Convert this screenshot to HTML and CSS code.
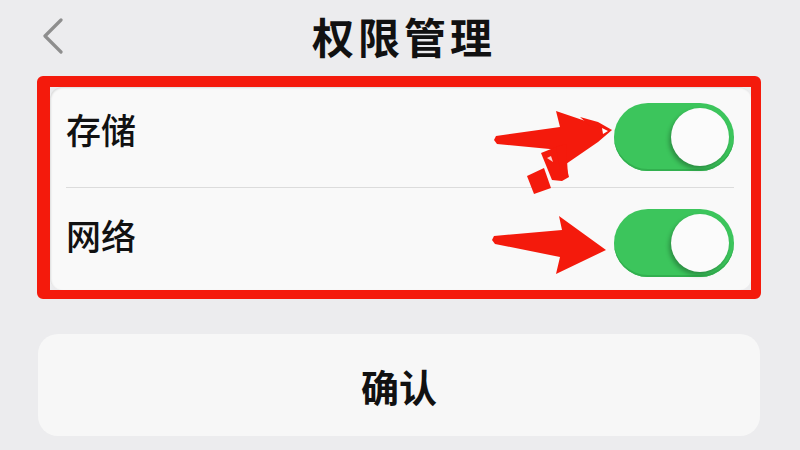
FILE: index.html
```html
<!DOCTYPE html>
<html lang="zh-CN">
<head>
<meta charset="utf-8">
<title>权限管理</title>
<link rel="stylesheet" href="styles.css">
</head>
<body>
<div class="page">
  <header class="topbar">
    <div class="back">
      <svg width="22" height="36" viewBox="0 0 22 36"><polyline points="19,2 3,18 19,34" fill="none" stroke="#8e8e8e" stroke-width="3.2" stroke-linecap="round" stroke-linejoin="round"/></svg>
    </div>
    <h1 class="title">权限管理</h1>
    <div></div>
  </header>

  <section class="frame">
    <div class="card">
      <div class="row first">
        <span class="label">存储</span>
        <span class="toggle"><span class="knob"></span></span>
      </div>
      <div class="row">
        <span class="label">网络</span>
        <span class="toggle"><span class="knob"></span></span>
      </div>
    </div>
  </section>

  <button class="confirm">确认</button>

  <svg class="marks" width="800" height="450" viewBox="0 0 800 450">
    <g fill="#f41a0c">
      <polygon points="496,136 560,127 556,111 612,130 598,142 566,164 560,150 497,144 494,140"/>
      <polygon points="580,117 598,122 612,130 590,126"/>
      <polygon points="541,153 561,145 569,177 562,181 552,180"/>
      <polygon points="556,147 566,144 568,176 561,175"/>
      <polygon points="527,176 544,168 551,188 534,194"/>
      <polygon points="494,236 562,230 559,216 606,250 556,274 560,257 495,244 492,240"/>
    </g>
    <polygon points="602,128 608,131 603,134" fill="#fff"/>
    <polygon points="547,158 551,156 553,162" fill="#fff" opacity="0.8"/>
  </svg>
</div>
</body>
</html>
```

FILE: styles.css
```css
html, body {
  margin: 0;
  padding: 0;
}
body {
  background: #ececee;
  font-family: "Noto Sans CJK SC", "Noto Sans", sans-serif;
  color: #111;
}
.page {
  position: relative;
  width: 800px;
  height: 450px;
  overflow: hidden;
}
.topbar {
  height: 76px;
  display: grid;
  grid-template-columns: 1fr auto 1fr;
  align-items: center;
}
.back {
  padding-left: 42px;
  display: flex;
  align-items: center;
  height: 76px;
  margin-top: -4px;
}
.title {
  margin: 0;
  font-size: 42px;
  font-weight: 700;
  letter-spacing: 4px;
  line-height: 1;
  margin-top: -4px;
  margin-left: 8px;
}
.frame {
  margin: 0 39px 0 37px;
  border: 10px solid #f41a0c;
  border-left-width: 13px;
  border-top-width: 11px;
  border-bottom-width: 9px;
  border-radius: 6px;
  background: #ececee;
}
.card {
  background: #f9f9f9;
  border-radius: 12px;
  padding: 0 17px 0 16px;
  box-shadow: inset 1px 1px 2px rgba(0,0,0,0.12);
}
.row {
  height: 102px;
  display: flex;
  align-items: center;
  justify-content: space-between;
}
.row.first {
  height: 100px;
  border-bottom: 1px solid #dcdcdc;
  align-items: flex-start;
}
.row.first .label {
  margin-top: 24px;
}
.row.first .toggle {
  margin-top: 16px;
}
.label {
  font-size: 35px;
  font-weight: 500;
  line-height: 1;
  margin-top: -10px;
}
.row .toggle {
  margin-top: 8px;
}
.toggle {
  width: 120px;
  height: 68px;
  border-radius: 34px;
  background: #3cc55c;
  box-shadow: inset 0 -2px 0 #32b04f;
  display: flex;
  align-items: center;
  justify-content: flex-end;
  padding-right: 5px;
  box-sizing: border-box;
}
.knob {
  width: 58px;
  height: 58px;
  border-radius: 50%;
  background: #fbfbfb;
  box-shadow: -2px 3px 4px rgba(0,0,0,0.28);
}
.confirm {
  display: block;
  width: 722px;
  height: 102px;
  margin: 35px 0 0 38px;
  border: none;
  border-radius: 20px;
  background: #f7f7f7;
  font-family: "Noto Sans CJK SC", "Noto Sans", sans-serif;
  font-size: 38px;
  font-weight: 700;
  color: #111;
  padding: 0;
}
.marks {
  position: absolute;
  left: 0;
  top: 0;
  pointer-events: none;
}
```
